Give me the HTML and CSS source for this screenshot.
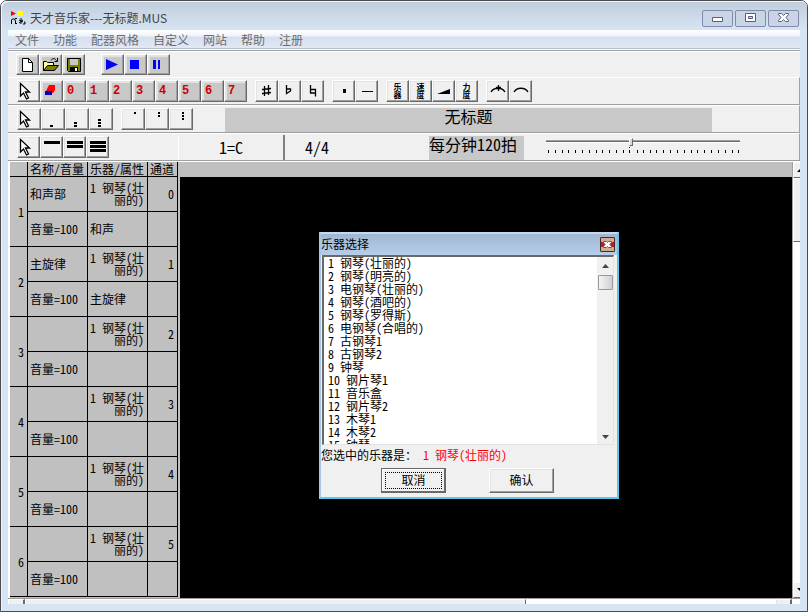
FILE: index.html
```
<!DOCTYPE html>
<html lang="zh-CN">
<head>
<meta charset="utf-8" />
<title>天才音乐家---无标题.MUS</title>
<meta name="viewport" content="width=device-width, initial-scale=1.0">
<link rel="stylesheet" href="styles.css">
</head>
<body>
<svg class="defs" width="0" height="0">
    <symbol id="arrow" viewBox="0 0 16 18"><path d="M3.500 1.500v12.500l3-3 3 6 2-1-3-6h4z" fill="#fff" stroke="#000" stroke-width="1.300"/></symbol>
</svg>
<div class="window">

    <!-- title -->
    <div class="titlebar">
        <svg class="logo" width="16" height="16" viewBox="0 0 16 16">
            <path d="M1 1l5 2.500-5 2.500z" fill="#f00"/><path d="M7 1h6v5H7z" fill="#ff0"/>
            <path d="M1.500 14v-4l1-1h2l1 2v3M5 8.500h2M6 13.500h1M11 8v6M9 10l4 2M13 10l-4 3M14 12h1v2h-2" fill="none" stroke="#000"/>
        </svg>
        <h1>天才音乐家---无标题.MUS</h1>
        <div class="winbtns">
            <button aria-label="最小化"><svg width="12" height="10"><path d="M.5 4.500h10v4H.5z" fill="#fff" stroke="#5a5c80"/></svg></button>
            <button aria-label="还原"><svg width="12" height="10"><path d="M.5 .5h10v8H.5zM3.500 3.500h4v2h-4z" fill="#fff" stroke="#5a5c80" fill-rule="evenodd"/></svg></button>
            <button aria-label="关闭"><svg width="12" height="10"><path d="M.5 .5h3l2 2 2-2h3v1L8 4.500l2.500 3v1h-3l-2-2-2 2h-3v-1L3 4.500l-2.500-3z" fill="#fff" stroke="#5a5c80"/></svg></button>
        </div>
    </div>

    <div class="client">
        <nav class="menu">
            <a href="#">文件</a><a href="#">功能</a><a href="#">配器风格</a><a href="#">自定义</a><a href="#">网站</a><a href="#">帮助</a><a href="#">注册</a>
        </nav>

        <!-- file / play -->
        <div class="bar bar-file">
            <div class="group">
                <button class="btn gray" aria-label="新建"><svg width="18" height="16"><path d="M3.500 1.500h6l4 4v9h-10z" fill="#fff" stroke="#000"/><path d="M9.500 1.500v4h4" fill="none" stroke="#000"/></svg></button>
                <button class="btn gray" aria-label="打开"><svg width="18" height="16"><path d="M1.500 13.500v-9h3l1 1h6v3" fill="#ffffa0" stroke="#000"/><path d="M1.500 13.500l4-5h11l-4 5z" fill="#808000" stroke="#000"/><path d="M9 3.500c2-3 4-2 5.500 0M15.500 1v3.500h-3" fill="none" stroke="#000"/></svg></button>
                <button class="btn gray" aria-label="保存"><svg width="18" height="16"><path d="M2.500 1.500h13v13h-12l-1-1z" fill="#808000" stroke="#000"/><path d="M5 2h8v6H5z" fill="#c8c8c8"/><path d="M5 10h8v4H5z"/><path d="M10 11h2v3h-2z" fill="#fff"/></svg></button>
            </div>
            <div class="group group-play">
                <button class="btn gray" aria-label="播放"><svg width="18" height="16"><path d="M2 2l12 5.500-12 5.500z" fill="#00f"/></svg></button>
                <button class="btn gray" aria-label="停止"><svg width="18" height="16"><path d="M3 3h9v9H3z" fill="#00f"/></svg></button>
                <button class="btn gray" aria-label="暂停"><svg width="18" height="16"><path d="M3 3h3v9H3zM8 3h2v9H8z" fill="#00f"/></svg></button>
            </div>
        </div>

        <!-- notes -->
        <div class="bar">
            <div class="group">
                <button class="btn pick" aria-label="选择"><svg width="16" height="18"><use href="#arrow"/></svg></button>
                <button class="btn gray" aria-label="橡皮"><svg width="18" height="16"><path d="M6 2h6v5l-2 3H2z" fill="#f00"/><path d="M2 8h7v4H2z" fill="#00c"/></svg></button>
                <button class="btn gray num">0</button>
                <button class="btn gray num">1</button>
                <button class="btn gray num">2</button>
                <button class="btn gray num">3</button>
                <button class="btn gray num">4</button>
                <button class="btn gray num">5</button>
                <button class="btn gray num">6</button>
                <button class="btn gray num">7</button>
            </div>
            <div class="group">
                <button class="btn" aria-label="升号"><svg width="16" height="16"><path d="M5.500 3v10M9.500 2v10M3 6.500l9-1M3 10.500l9-1" fill="none" stroke="#000" stroke-width="1.300"/></svg></button>
                <button class="btn" aria-label="降号"><svg width="16" height="16"><path d="M4.500 2v8.500l4-2.500v-2h-4" fill="none" stroke="#000" stroke-width="1.300"/></svg></button>
                <button class="btn" aria-label="还原号"><svg width="16" height="16"><path d="M5.500 2v8h5M5.500 6.500h5v7" fill="none" stroke="#000" stroke-width="1.300"/></svg></button>
            </div>
            <div class="group">
                <button class="btn" aria-label="附点"><svg width="16" height="16"><path d="M7 6h3v4H7z"/></svg></button>
                <button class="btn" aria-label="延音"><svg width="16" height="16"><path d="M3 8h11v1H3z"/></svg></button>
            </div>
            <div class="group">
                <button class="btn tiny">乐<br>器</button>
                <button class="btn tiny">速<br>度</button>
                <button class="btn" aria-label="渐强"><svg width="16" height="16"><path d="M1 11l13-5v5z"/></svg></button>
                <button class="btn tiny">力<br>度</button>
            </div>
            <div class="group">
                <button class="btn" aria-label="三连音"><svg width="16" height="16"><path d="M1 9c3-5 11-5 14 0M8.500 2v6M6 4.500h5" fill="none" stroke="#000" stroke-width="1.300"/></svg></button>
                <button class="btn" aria-label="连线"><svg width="16" height="16"><path d="M1 9c3-5 11-5 14 0" fill="none" stroke="#000" stroke-width="1.300"/></svg></button>
            </div>
        </div>

        <!-- octave + song name -->
        <div class="bar bar-oct">
            <div class="group">
                <button class="btn pick" aria-label="选择"><svg width="16" height="18"><use href="#arrow"/></svg></button>
                <button class="btn" aria-label="低音"><svg width="16" height="18"><path d="M5 15h3v2H5z"/></svg></button>
                <button class="btn" aria-label="倍低音"><svg width="16" height="18"><path d="M5 12h3v2H5zM5 15h3v2H5z"/></svg></button>
                <button class="btn" aria-label="超低音"><svg width="16" height="18"><path d="M5 9h3v2H5zM5 12h3v2H5zM5 15h3v2H5z"/></svg></button>
            </div>
            <div class="group">
                <button class="btn" aria-label="高音"><svg width="16" height="18"><path d="M9 2h2v2H9z"/></svg></button>
                <button class="btn" aria-label="倍高音"><svg width="16" height="18"><path d="M9 2h2v2H9zM9 5h2v2H9z"/></svg></button>
                <button class="btn" aria-label="超高音"><svg width="16" height="18"><path d="M9 2h2v2H9zM9 5h2v2H9zM9 8h2v2H9z"/></svg></button>
            </div>
            <div class="songname">无标题</div>
        </div>

        <!-- rhythm, key, beat, tempo -->
        <div class="bar bar-beat">
            <div class="group">
                <button class="btn pick" aria-label="选择"><svg width="16" height="18"><use href="#arrow"/></svg></button>
                <button class="btn" aria-label="八分"><svg width="18" height="18"><path d="M1 3h16v3H1z"/></svg></button>
                <button class="btn" aria-label="十六分"><svg width="18" height="18"><path d="M1 3h16v3H1zM1 7h16v3H1z"/></svg></button>
                <button class="btn" aria-label="三十二分"><svg width="18" height="18"><path d="M1 3h16v3H1zM1 7h16v3H1zM1 11h16v3H1z"/></svg></button>
            </div>
            <div class="key">1=C</div>
            <div class="beat">4/4</div>
            <label class="tempo" for="tempo">每分钟120拍</label>
            <div class="slider">
                <input type="range" id="tempo" min="20" max="250" value="120">
                <svg width="194" height="6"><path d="M2 3v3M9 3v3M16 3v3M22 3v3M29 3v3M36 3v3M43 3v3M50 3v3M56 3v3M63 3v3M70 3v3M77 3v3M83 0v1M83 3v3M91 3v3M97 3v3M104 3v3M110 3v3M117 3v3M124 3v3M131 3v3M138 3v3M145 3v3M151 3v3M158 3v3M165 3v3M172 3v3M179 3v3M186 3v3M192 3v3" stroke="#000" transform="translate(.5 0)"/></svg>
            </div>
        </div>

        <div class="work">
            <div class="tracks">
                <table>
                    <thead><tr><th class="c-no"></th><th class="c-name">名称/音量</th><th class="c-name">乐器/属性</th><th class="c-ch">通道</th></tr></thead>
                    <tbody>
                        <tr><td rowspan="2" class="r">1</td><td>和声部</td><td class="ins">1 钢琴(壮<br>丽的)</td><td class="r">0</td></tr>
                        <tr><td>音量=100</td><td>和声</td><td></td></tr>
                        <tr><td rowspan="2" class="r">2</td><td>主旋律</td><td class="ins">1 钢琴(壮<br>丽的)</td><td class="r">1</td></tr>
                        <tr><td>音量=100</td><td>主旋律</td><td></td></tr>
                        <tr><td rowspan="2" class="r">3</td><td></td><td class="ins">1 钢琴(壮<br>丽的)</td><td class="r">2</td></tr>
                        <tr><td>音量=100</td><td></td><td></td></tr>
                        <tr><td rowspan="2" class="r">4</td><td></td><td class="ins">1 钢琴(壮<br>丽的)</td><td class="r">3</td></tr>
                        <tr><td>音量=100</td><td></td><td></td></tr>
                        <tr><td rowspan="2" class="r">5</td><td></td><td class="ins">1 钢琴(壮<br>丽的)</td><td class="r">4</td></tr>
                        <tr><td>音量=100</td><td></td><td></td></tr>
                        <tr><td rowspan="2" class="r">6</td><td></td><td class="ins">1 钢琴(壮<br>丽的)</td><td class="r">5</td></tr>
                        <tr><td>音量=100</td><td></td><td></td></tr>
                    </tbody>
                </table>
            </div>

            <div class="score">
                <div class="dialog" role="dialog" aria-labelledby="dlg-title">
                    <div class="dlg-head">
                        <h2 id="dlg-title">乐器选择</h2>
                        <button class="dlg-close" aria-label="关闭"><svg width="13" height="13"><path d="M0 4h13v5H0z" fill="#c81818"/><path d="M2.500 3.500h3l1 1 1-1h3v1L9 6.500l1.500 2v1h-3l-1-1-1 1h-3v-1L4 6.500l-1.500-2z" fill="#fff" stroke="#555a78"/></svg></button>
                    </div>
                    <div class="list">
                        <select size="15" aria-label="乐器">
                            <option>1 钢琴(壮丽的)</option>
                            <option>2 钢琴(明亮的)</option>
                            <option>3 电钢琴(壮丽的)</option>
                            <option>4 钢琴(酒吧的)</option>
                            <option>5 钢琴(罗得斯)</option>
                            <option>6 电钢琴(合唱的)</option>
                            <option>7 古钢琴1</option>
                            <option>8 古钢琴2</option>
                            <option>9 钟琴</option>
                            <option>10 钢片琴1</option>
                            <option>11 音乐盒</option>
                            <option>12 钢片琴2</option>
                            <option>13 木琴1</option>
                            <option>14 木琴2</option>
                            <option>15 钟琴</option>
                        </select>
                        <div class="list-scroll">
                            <svg width="7" height="4"><path d="M0 4l3.500-4L7 4z" fill="#444"/></svg>
                            <i class="list-thumb"></i>
                            <svg width="7" height="4"><path d="M0 0h7L3.500 4z" fill="#444"/></svg>
                        </div>
                    </div>
                    <p class="picked">您选中的乐器是：<span>1 钢琴(壮丽的)</span></p>
                    <div class="dlg-btns">
                        <button class="push cur">取消</button>
                        <button class="push">确认</button>
                    </div>
                </div>
            </div>

            <div class="vscroll">
                <div class="v-up"><svg width="7" height="4"><path d="M0 4l4-4 3 3v1z"/></svg></div>
                <div class="v-thumb"></div>
                <div class="v-down"><svg width="7" height="4"><path d="M0 0h7v1L4 4z"/></svg></div>
            </div>
        </div>

        <div class="hscroll">
            <i class="h-left"></i><i class="h-thumb"></i><i class="h-track"></i><i class="h-right"></i><i class="h-corner"></i>
        </div>
    </div>
</div>
</body>
</html>
```
FILE: styles.css
```
*{box-sizing:border-box;}
body{margin:0;background:#fff;overflow:hidden;font:12px/12px "Noto Sans CJK SC",sans-serif;color:#000;}
h1,h2,p{margin:0;font-size:12px;font-weight:normal;}
button{margin:0;padding:0;font:inherit;color:inherit;}
svg{display:block;flex:none;}
.defs{position:absolute;}

.window{display:flex;flex-direction:column;height:100vh;padding:0 7px 7px;border:1px solid #4a4a50;border-radius:7px 7px 0 0;background:#d7e4f4;box-shadow:inset 1px 1px #f0f6fc;}
.titlebar{display:flex;flex:none;align-items:center;height:29px;margin:0 -7px;padding:5px 8px 0 9px;border-radius:6px 6px 0 0;background:linear-gradient(#c0cddb,#d7e4f4);box-shadow:inset 1px 1px #f0f6fc;}
.titlebar h1{flex:1;margin-left:4px;color:#444;line-height:18px;}
.winbtns{display:flex;gap:2px;}
.winbtns button{display:flex;align-items:center;justify-content:center;width:31px;height:17px;border:1px solid #8288ae;border-radius:2px;background:#c8d5e4;}

.client{display:flex;flex:1;flex-direction:column;min-height:0;background:#f0f0f0;}
.menu{display:flex;flex:none;gap:14px;height:21px;padding:0 7px;border-bottom:1px solid #a0a0a0;background:linear-gradient(#fff,#f0f3f9 6px,#d6dfef 7px,#e2e8f4 18px,#b4bccf 18px,#b4bccf 19px,#fff 19px);}
.menu a{color:#6d6d6d;line-height:20px;text-decoration:none;}

/* toolbars */
.bar{display:flex;flex:none;gap:8px;height:28px;padding:2px 0 0 9px;border-top:1px solid #fff;border-right:1px solid #a0a0a0;border-bottom:1px solid #a0a0a0;}
.bar-file{height:26px;padding-left:8px;border-right:0;border-bottom:0;gap:16px;}
.group{display:flex;flex:none;}
.btn{display:flex;align-items:center;justify-content:center;width:23px;height:22px;border:1px solid;border-color:#fff #696969 #696969 #fff;box-shadow:inset -1px -1px #a0a0a0,inset 1px 1px #e3e3e3;background:#f0f0f0;}
.bar-file .btn{height:21px;}
.gray{background:#c8c8c8;box-shadow:inset -1px -1px #a0a0a0,inset 2px 2px #e3e3e3;}
.pick{padding-right:8px;}
.num{padding-right:8px;color:#d00000;font:bold 12px/16px "Liberation Mono",monospace;}
.tiny{font-size:8px;line-height:8px;font-weight:bold;}
.bar-oct .btn{width:24px;}
.songname{flex:1;height:24px;margin:0 87px 0 24px;background:#c8c8c8;font-size:16px;line-height:16px;text-align:center;}
.bar-beat{gap:0;font-size:16px;font-feature-settings:"hwid";}
.key{width:105px;margin-left:69px;padding-left:40px;border-left:1px solid #fff;line-height:22px;}
.beat{width:146px;margin-top:-1px;padding-left:20px;border-left:2px solid #808080;line-height:24px;}
.tempo{width:95px;height:24px;background:#c8c8c8;line-height:16px;}
.slider{width:194px;margin-left:22px;padding-top:2px;}
.slider input{display:block;width:100%;height:8px;margin:0;-webkit-appearance:none;appearance:none;background:linear-gradient(#a0a0a0 1px,#696969 1px,#696969 2px,#fff 2px) 0 2px/100% 3px no-repeat;}
.slider input::-webkit-slider-thumb{-webkit-appearance:none;width:4px;height:8px;border:1px solid;border-color:#fff #696969 #696969 #fff;background:#d8d8d8;}
.slider svg{margin-top:1px;}

/* tracks + score */
.work{display:flex;flex:1;min-height:0;padding-left:2px;border-top:1px solid #fff;background:#fff;}
.tracks{flex:none;width:170px;overflow:hidden;background:#c0c0c0;}
table{width:168px;table-layout:fixed;border-collapse:separate;border-spacing:0;font-feature-settings:"hwid";}
th,td{height:35px;padding:0 2px;border:0 solid #000;border-width:0 1px 1px 0;font-weight:normal;text-align:left;white-space:nowrap;line-height:12px;}
th{height:15px;}
.c-no{width:18px;}
.c-name{width:60px;}
.c-ch{width:30px;}
.r,.ins{padding-right:3px;text-align:right;}
.score{position:relative;flex:1;border-top:15px solid #c0c0c0;background:#000;overflow:hidden;}
.vscroll{display:flex;flex:none;flex-direction:column;width:8px;overflow:hidden;border-left:1px solid #a0a0a0;background:#fff;}
.v-up,.v-thumb,.v-down{flex:none;width:16px;border:1px solid;border-color:#fff #696969 #696969 #fff;background:#f0f0f0;}
.v-up,.v-down{height:16px;padding:5px 0 0 3px;}
.v-thumb{height:64px;}
.v-down{margin-top:auto;}
.hscroll{display:flex;flex:none;height:6px;padding-left:1px;border-top:1px solid #a0a0a0;background:#fff;}
.hscroll i{border-top:1px solid #fff;background:#f0f0f0;}
.h-left,.h-right{width:16px;border-right:2px solid #696969;}
.h-thumb{flex:2;border-left:1px solid #fff;border-right:1px solid #696969;}
.hscroll .h-track{flex:1;background:#fff;}
.h-right{border-left:1px solid #e3e3e3;}
.hscroll .h-corner{width:8px;background:#fff;}

/* instrument dialog */
.dialog{position:absolute;left:139px;top:55px;width:300px;height:267px;border:2px solid;border-color:#c6d8ea #58c8ec #58c8ec #a9c6e4;background:#f0f0f0;font-feature-settings:"hwid";}
.dlg-head{display:flex;align-items:center;justify-content:space-between;height:21px;padding-right:2px;background:linear-gradient(#9fb7d2,#b6cee8);}
.dlg-head h2{line-height:12px;padding-bottom:2px;}
.dlg-close{width:15px;height:15px;border:1px solid #3c2c30;border-radius:1px;background:#d8a890;}
.list{display:flex;width:292px;height:190px;margin-left:1px;border:1px solid;border-width:2px 1px 1px 2px;border-color:#696969 #e3e3e3 #e3e3e3 #696969;background:#fff;overflow:hidden;}
.list select{flex:1;height:190px;margin-top:-3px;padding:0;border:0;outline:0;background:#fff;color:#000;font:inherit;font-feature-settings:inherit;overflow:hidden;}
.list option{height:13px;min-height:13px;padding:0 4px;line-height:13px;}
.list-scroll{display:flex;flex-direction:column;align-items:center;width:16px;padding:7px 0 5px;background:#f0f0f0;}
.list-thumb{width:15px;height:15px;margin:7px 0 auto;border:1px solid #989898;border-radius:1px;background:linear-gradient(90deg,#f4f4f4,#d0d0d4);}
.picked{height:20px;margin-top:3px;line-height:14px;}
.picked span{margin-left:6px;color:#f00;}
.dlg-btns{display:flex;gap:43px;padding-left:60px;}
.push{width:65px;height:25px;padding-bottom:2px;border:1px solid;border-color:#fff #696969 #696969 #fff;box-shadow:inset -1px -1px #a0a0a0,inset 1px 1px #e3e3e3;background:#f0f0f0;}
.cur{border-color:#696969;outline:1px dotted #000;outline-offset:-5px;box-shadow:inset -1px -1px #696969,inset 1px 1px #fff;}
```
